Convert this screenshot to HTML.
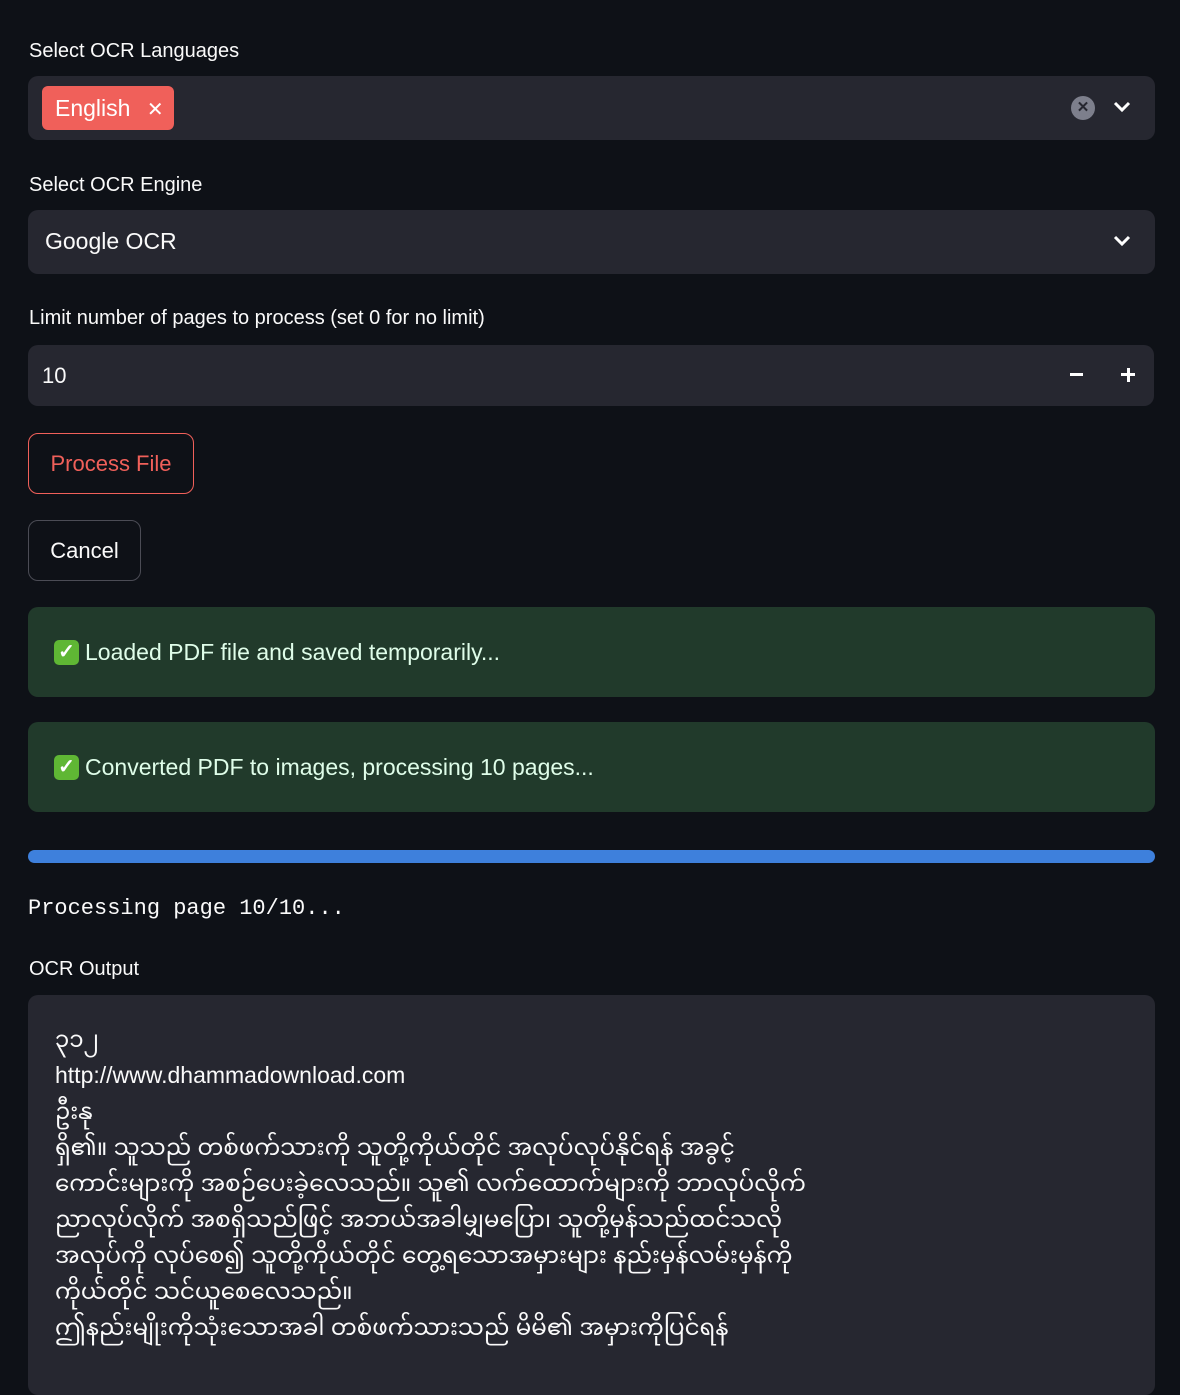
<!DOCTYPE html>
<html><head><meta charset="utf-8"><style>
*{box-sizing:border-box;margin:0;padding:0}
body{width:1180px;height:1348px;background:#0e1117;color:#fafafa;font-family:"Liberation Sans",sans-serif;position:relative;overflow:hidden}
.a{position:absolute}
.lbl{font-size:20px;color:#fafafa;left:29px}
.box{left:28px;width:1127px;background:#262730;border-radius:10px}
.btn{border:1px solid #4b4c55;border-radius:10px;font-size:22px;display:flex;align-items:center;justify-content:center;left:28px}
.succ{left:28px;width:1127px;height:90px;background:#213a2b;border-radius:10px;color:#dffde9;font-size:23px;display:flex;align-items:center;padding-left:26px}
.chk{display:inline-block;width:25px;height:25px;background:#5fb734;border-radius:5px;color:#fff;font-size:20px;line-height:25px;text-align:center;margin-right:6px;font-weight:bold}
.my{font-family:"Liberation Sans","Noto Sans Myanmar","Padauk","Myanmar Text",sans-serif}
</style></head><body>
<div class="a lbl" style="top:40px">Select OCR Languages</div>
<div class="a box" style="top:76px;height:64px">
  <div class="a" style="left:14px;top:10px;width:132px;height:44px;background:#f0605a;border-radius:6px;color:#fff;font-size:23px;line-height:44px;padding-left:13px">English <span style="font-size:20px;margin-left:10px">✕</span></div>
  <div class="a" style="left:1043px;top:20px;width:24px;height:24px;border-radius:50%;background:#7d7f8c;color:#262730;font-size:15px;line-height:24px;text-align:center;font-weight:bold">✕</div>
  <svg class="a" style="left:1085px;top:24px" width="18" height="14"><path d="M2 3l7 7 7-7" stroke="#fff" stroke-width="3" fill="none"/></svg>
</div>
<div class="a lbl" style="top:174px">Select OCR Engine</div>
<div class="a box" style="top:210px;height:64px">
  <div class="a" style="left:17px;top:18px;font-size:23px">Google OCR</div>
  <svg class="a" style="left:1085px;top:24px" width="18" height="14"><path d="M2 3l7 7 7-7" stroke="#fff" stroke-width="3" fill="none"/></svg>
</div>
<div class="a lbl" style="top:307px">Limit number of pages to process (set 0 for no limit)</div>
<div class="a box" style="top:345px;height:61px;width:1126px">
  <div class="a" style="left:14px;top:18px;font-size:22px">10</div>
  <div class="a" style="left:1042px;top:28px;width:13px;height:3px;background:#fff"></div>
  <div class="a" style="left:1093px;top:28px;width:14px;height:3px;background:#fff"></div>
  <div class="a" style="left:1098.5px;top:22.5px;width:3px;height:14px;background:#fff"></div>
</div>
<div class="a btn" style="top:433px;width:166px;height:61px;border-color:#f0605a;color:#f0605a">Process File</div>
<div class="a btn" style="top:520px;width:113px;height:61px">Cancel</div>
<div class="a succ" style="top:607px"><span class="chk">✓</span>Loaded PDF file and saved temporarily...</div>
<div class="a succ" style="top:722px"><span class="chk">✓</span>Converted PDF to images, processing 10 pages...</div>
<div class="a" style="left:28px;top:850px;width:1127px;height:13px;background:#3e80dc;border-radius:7px"></div>
<div class="a" style="left:28px;top:896px;font-family:'Liberation Mono',monospace;font-size:22px">Processing page 10/10...</div>
<div class="a lbl" style="top:958px">OCR Output</div>
<div class="a box my" style="top:995px;height:400px;padding:26px 0 0 27px;font-size:23px;line-height:36px;white-space:pre">၃၁၂
http://www.dhammadownload.com
ဦးနု
ရှိ၏။ သူသည် တစ်ဖက်သားကို သူတို့ကိုယ်တိုင် အလုပ်လုပ်နိုင်ရန် အခွင့်
ကောင်းများကို အစဉ်ပေးခဲ့လေသည်။ သူ၏ လက်ထောက်များကို ဘာလုပ်လိုက်
ညာလုပ်လိုက် အစရှိသည်ဖြင့် အဘယ်အခါမျှမပြော၊ သူတို့မှန်သည်ထင်သလို
အလုပ်ကို လုပ်စေ၍ သူတို့ကိုယ်တိုင် တွေ့ရသောအမှားများ နည်းမှန်လမ်းမှန်ကို
ကိုယ်တိုင် သင်ယူစေလေသည်။
ဤနည်းမျိုးကိုသုံးသောအခါ တစ်ဖက်သားသည် မိမိ၏ အမှားကိုပြင်ရန်</div>
</body></html>
